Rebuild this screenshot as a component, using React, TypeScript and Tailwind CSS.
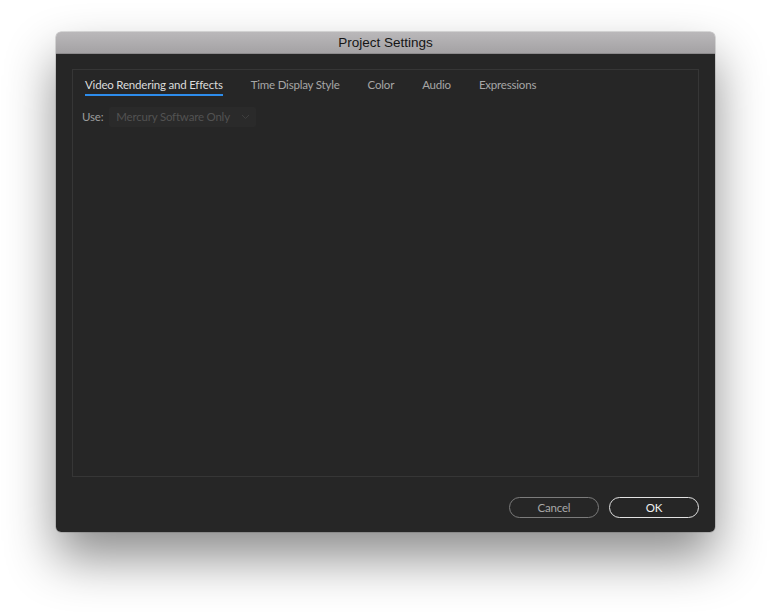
import React from "react";

const tabs = ["Video Rendering and Effects", "Time Display Style", "Color", "Audio", "Expressions"];

export default function App() {
  return (
    <div className="w-[770px] h-[612px] bg-white pt-[32px] pl-[56px]">
      <div className="w-[659px] h-[500px] rounded-[5px] flex flex-col shadow-[0_26px_50px_rgba(0,0,0,0.45),0_0_0_0.5px_rgba(0,0,0,0.25)] overflow-hidden">
        <div className="h-[22px] shrink-0 bg-gradient-to-b from-[#bab8ba] to-[#a4a2a4] flex items-center justify-center border-b border-[#8c8a8c]">
          <span className="text-[13.5px] text-[#151515] leading-none" style={{ fontFamily: '"Liberation Sans", Arial, sans-serif' }}>
            Project Settings
          </span>
        </div>
        <div className="flex-1 bg-[#262626] flex flex-col px-[16px] pt-[15px] pb-[14px]" style={{ fontFamily: 'Lato, "Open Sans", sans-serif' }}>
          <div className="h-[408px] border border-[#363636] flex flex-col pl-[9px]">
            <div className="flex items-start gap-[28px] pl-[3px] pt-[7px] h-[35px]">
              {tabs.map((t, i) => (
                <div key={t} className="flex flex-col">
                  <span className={"text-[11.5px] tracking-[-0.2px] leading-[16px] " + (i === 0 ? "text-[#dcdcdc]" : "text-[#a6a6a6]")}>{t}</span>
                  <div className={"h-[2px] mt-[1px] " + (i === 0 ? "bg-[#2d8ceb]" : "bg-transparent")} />
                </div>
              ))}
            </div>
            <div className="flex items-center gap-[6px] mt-[2px]">
              <span className="text-[11.5px] tracking-[-0.2px] text-[#9c9c9c]">Use:</span>
              <div className="w-[147px] h-[20px] bg-[#2a2a2a] rounded-[2px] flex items-center justify-between pl-[7px] pr-[6px]">
                <span className="text-[11.5px] tracking-[-0.2px] text-[#525252]">Mercury Software Only</span>
                <svg width="9" height="6" viewBox="0 0 9 6" fill="none">
                  <path d="M1 1l3.5 3.5L8 1" stroke="#3e3e3e" strokeWidth="1" />
                </svg>
              </div>
            </div>
          </div>
          <div className="flex justify-end gap-[10px] mt-[20px]">
            <button className="w-[90px] h-[21px] rounded-full border border-[#7c7c7c] text-[11.5px] tracking-[-0.2px] text-[#a8a8a8] flex items-center justify-center">
              Cancel
            </button>
            <button className="w-[90px] h-[21px] rounded-full border border-[#e2e2e2] text-[11.5px] tracking-[-0.2px] text-[#f0f0f0] flex items-center justify-center">
              OK
            </button>
          </div>
        </div>
      </div>
    </div>
  );
}
